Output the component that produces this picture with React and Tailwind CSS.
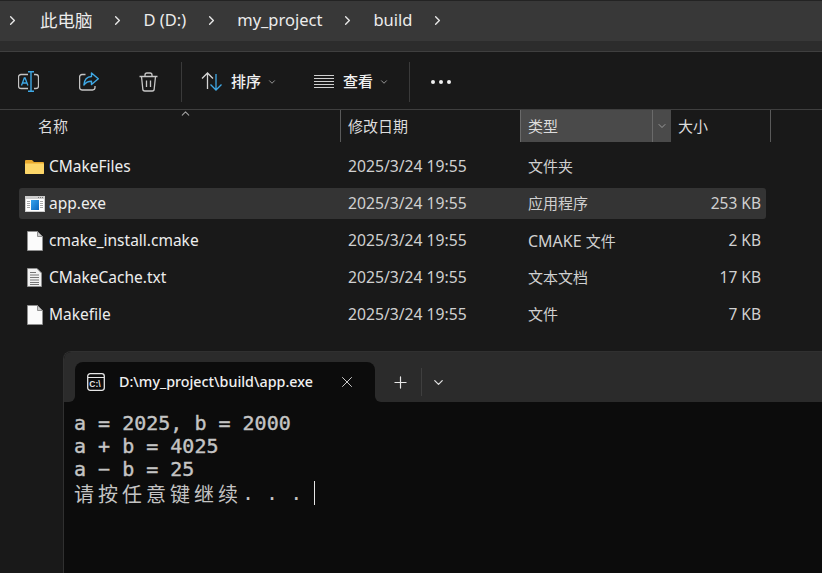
import React from "react";
import { ChevronRight, ChevronDown, ChevronUp, Plus, X } from "lucide-react";

const uiFont = "font-['Noto_Sans','Noto_Sans_CJK_SC',sans-serif]";

function RenameIcon() {
  return (
    <svg width="21" height="21" viewBox="0 0 21 21" fill="none">
      <path d="M10 3.500H3a2.500 2.500 0 0 0-2.500 2.500v9a2.500 2.500 0 0 0 2.500 2.500h7" stroke="#c4c4c4" strokeWidth="1.300" />
      <path d="M16 3.500h2a2.500 2.500 0 0 1 2.500 2.500v9a2.500 2.500 0 0 1-2.500 2.500h-2" stroke="#c4c4c4" strokeWidth="1.300" />
      <path d="M10 .7h6M13 .7v19.600M10 20.300h6" stroke="#3fa9e6" strokeWidth="1.400" />
      <path d="M3.500 14.500 6.300 7h.8l2.800 7.500M4.600 12h4.200" stroke="#3fa9e6" strokeWidth="1.300" />
    </svg>
  );
}

function ShareIcon() {
  return (
    <svg width="20" height="19" viewBox="0 0 20 19" fill="none">
      <path d="M6.500 2.500H3a2.400 2.400 0 0 0-2.400 2.400v10.700a2.400 2.400 0 0 0 2.400 2.400h10.600a2.400 2.400 0 0 0 2.400-2.400v-1.500" stroke="#c4c4c4" strokeWidth="1.300" />
      <path d="M12.500 1 19.300 6.800l-6.800 5.700V9.300c-3.500 0-5.800 1.200-7.600 3.700.4-4.800 3-8.300 7.600-8.500z" stroke="#3fa9e6" strokeWidth="1.400" strokeLinejoin="round" />
    </svg>
  );
}

function TrashIcon() {
  return (
    <svg width="19" height="20" viewBox="0 0 19 20" fill="none" stroke="#c8c8c8" strokeWidth="1.300">
      <path d="M.5 4.500h18M6 4.500V3a2 2 0 0 1 2-2h3a2 2 0 0 1 2 2v1.500" />
      <path d="M2.500 4.500 3.800 17a2 2 0 0 0 2 2h7.400a2 2 0 0 0 2-2l1.300-12.500" />
      <path d="M7.500 8.500v6.500M11.500 8.500v6.500" />
    </svg>
  );
}

function SortIcon() {
  return (
    <svg width="21" height="19" viewBox="0 0 21 19" fill="none" strokeWidth="1.300">
      <path d="M1 6.500 6.500 1 12 6.500M6.500 1v16" stroke="#d5d5d5" />
      <path d="M9.500 12.500 15 18l5.500-5.500M15 2v16" stroke="#3fa9e6" />
    </svg>
  );
}

function ViewIcon() {
  return (
    <svg width="20" height="14" viewBox="0 0 20 14" stroke="#cfcfcf" strokeWidth="1">
      <path d="M0 .5h20M0 3.500h20M0 6.500h20M0 9.500h20M0 12.500h20" />
    </svg>
  );
}

function FolderIcon() {
  return (
    <svg width="19" height="14" viewBox="0 0 19 14">
      <path d="M1 0h6l2 2h9a1 1 0 0 1 1 1v10a1 1 0 0 1-1 1H1a1 1 0 0 1-1-1V1a1 1 0 0 1 1-1z" fill="#e8a92e" />
      <path d="M0 3.500h18a1 1 0 0 1 1 1V13a1 1 0 0 1-1 1H1a1 1 0 0 1-1-1z" fill="#fcd669" />
    </svg>
  );
}

function ExeIcon() {
  return (
    <svg width="20" height="16" viewBox="0 0 20 16">
      <defs>
        <linearGradient id="exeBlue" x1="0" y1="0" x2="1" y2="1">
          <stop offset="0" stopColor="#35a4ee" />
          <stop offset="1" stopColor="#0a66bd" />
        </linearGradient>
      </defs>
      <rect width="20" height="16" fill="#cdcdcd" />
      <rect x="1" y="3" width="18" height="12" fill="#fff" />
      <rect x="6" y="4" width="8" height="10" fill="url(#exeBlue)" />
      <path d="M2 5.500h3M2 7.500h3M2 9.500h3M2 11.500h3M15 5.500h3M15 7.500h3M15 9.500h3M15 11.500h3" stroke="#a8a8a8" strokeWidth="1" />
      <path d="M13 1h1v1h-1zM15 1h1v1h-1zM17 1h1v1h-1z" fill="#777" />
    </svg>
  );
}

function FileIcon() {
  return (
    <svg width="16" height="20" viewBox="0 0 16 20">
      <path d="M.5.500h10l5 5v14H.500z" fill="#fbfbfb" stroke="#8f8f8f" />
      <path d="M10.500.500v5h5z" fill="#c9c9c9" stroke="#8f8f8f" />
    </svg>
  );
}

function TextFileIcon() {
  return (
    <svg width="15" height="19" viewBox="0 0 15 19">
      <path d="M.5.500h9.500l4.500 4.500v13.500H.500z" fill="#f2f2f2" stroke="#8f8f8f" />
      <path d="M3 4.500h6M3 7h9M3 9.500h9M3 12h9M3 14.500h9M3 16.500h9" stroke="#777" strokeWidth="1" />
    </svg>
  );
}

function TerminalIcon() {
  return (
    <svg width="18" height="18" viewBox="0 0 18 18" fill="none">
      <rect x=".7" y=".7" width="16.600" height="16.600" rx="2.500" stroke="#e6e6e6" strokeWidth="1.300" />
      <path d="M1 4.500h16" stroke="#e6e6e6" strokeWidth="1.200" />
      <text x="2.300" y="13.700" fontSize="8.500" fontWeight="700" fill="#e6e6e6" fontFamily="Liberation Sans, sans-serif">C:\</text>
    </svg>
  );
}

const files = [
  { name: "CMakeFiles", type: "文件夹", size: "", icon: <FolderIcon /> },
  { name: "app.exe", type: "应用程序", size: "253 KB", icon: <ExeIcon />, selected: true },
  { name: "cmake_install.cmake", prefix: "CMAKE ", type: "文件", size: "2 KB", icon: <FileIcon /> },
  { name: "CMakeCache.txt", type: "文本文档", size: "17 KB", icon: <TextFileIcon /> },
  { name: "Makefile", type: "文件", size: "7 KB", icon: <FileIcon /> },
];

function Crumb({ children, className }) {
  return (
    <>
      <span className={className}>{children}</span>
      <ChevronRight size={15} strokeWidth={2.2} className="ml-[17.500px] text-[#e8e8e8]" />
    </>
  );
}

function FileRow({ file }) {
  return (
    <div className={`flex items-center h-[31px] w-[747px] rounded-[3px] ${file.selected ? "bg-[#343434]" : ""}`}>
      <div className="w-[30px] flex justify-center shrink-0 pl-[1px]">{file.icon}</div>
      <div className="w-[299px] text-[#ededed]">{file.name}</div>
      <div className="w-[180px] text-[#d0d0d0] text-[15.700px]">2025/3/24 19:55</div>
      <div className="w-[120px] text-[#d0d0d0] text-[15px]">
        {file.prefix && <span className="text-[16px]">{file.prefix}</span>}
        {file.type}
      </div>
      <div className="w-[113px] text-right text-[#d0d0d0]">{file.size}</div>
    </div>
  );
}

export default function App() {
  return (
    <div className={`relative w-[822px] h-[573px] overflow-hidden bg-[#191919] text-[15.500px] ${uiFont}`}>
      {/* address bar */}
      <div className="h-[1px] bg-[#232323]" />
      <div className="h-[40px] bg-[#383838] flex items-center text-[#ececec] text-[16.500px] pb-[1px]">
        <ChevronRight size={15} strokeWidth={2.2} className="ml-[5px] text-[#e8e8e8]" />
        <Crumb className="ml-[20px] text-[17.500px]">此电脑</Crumb>
        <Crumb className="ml-[18.500px]">D (D:)</Crumb>
        <Crumb className="ml-[18.500px]">my_project</Crumb>
        <Crumb className="ml-[18.500px]">build</Crumb>
      </div>
      <div className="h-[10px] bg-[#2c2c2c]" />
      <div className="h-[1px] bg-[#3f3f3f]" />

      {/* toolbar */}
      <div className="h-[57px] pt-[2px] flex items-center text-[15px] font-medium text-[#f0f0f0]">
        <div className="ml-[18px]"><RenameIcon /></div>
        <div className="ml-[40px]"><ShareIcon /></div>
        <div className="ml-[40px]"><TrashIcon /></div>
        <div className="w-px h-[40px] bg-[#3a3a3a] ml-[23px]" />
        <div className="ml-[19px]"><SortIcon /></div>
        <span className="ml-[9px]">排序</span>
        <ChevronDown size={10} className="ml-[6px] text-[#b0b0b0]" />
        <div className="ml-[37px]"><ViewIcon /></div>
        <span className="ml-[9px]">查看</span>
        <ChevronDown size={10} className="ml-[6px] text-[#b0b0b0]" />
        <div className="w-px h-[40px] bg-[#3a3a3a] ml-[20px]" />
        <div className="ml-[21px] flex gap-[4px]">
          <span className="w-[4px] h-[4px] rounded-full bg-[#f0f0f0]" />
          <span className="w-[4px] h-[4px] rounded-full bg-[#f0f0f0]" />
          <span className="w-[4px] h-[4px] rounded-full bg-[#f0f0f0]" />
        </div>
      </div>
      <div className="h-[1px] bg-[#3f3f3f]" />

      {/* column headers */}
      <div className="relative h-[32px] flex items-stretch text-[15px] text-[#dcdcdc]">
        <ChevronUp size={13} className="absolute left-[179px] top-[-3px] text-[#a0a0a0]" />
        <div className="w-[341px] pl-[38px] border-r border-[#5a5a5a] flex items-center">名称</div>
        <div className="w-[179px] pl-[7px] flex items-center">修改日期</div>
        <div className="w-[151px] flex items-stretch bg-[#4a4a4a] border-l border-[#6a6a6a]">
          <div className="flex-1 pl-[7px] flex items-center">类型</div>
          <div className="w-[19px] border-l border-[#6a6a6a] flex items-center justify-center">
            <ChevronDown size={12} className="text-[#9a9a9a]" />
          </div>
        </div>
        <div className="w-[100px] pl-[7px] border-r border-[#5a5a5a] flex items-center">大小</div>
      </div>

      {/* file list */}
      <div className="pl-[19px] pt-[9px] flex flex-col gap-[6px]">
        {files.map((f) => <FileRow key={f.name} file={f} />)}
      </div>

      {/* terminal window */}
      <div className="absolute left-[63px] top-[351px] w-[770px] h-[230px] bg-[#0c0c0c] rounded-tl-[8px] border-l border-t border-[#303030] flex flex-col overflow-hidden">
        <div className="h-[10px] bg-[#2b2b2b]" />
        <div className="h-[40px] flex items-stretch">
          <div className="w-[11px] bg-[#2b2b2b] rounded-br-[6px]" />
          <div className="w-[300px] bg-[#2b2b2b]">
            <div className="h-full bg-[#0c0c0c] rounded-t-[8px] flex items-center pl-[12px] text-[14.300px] font-medium text-[#f0f0f0]">
              <TerminalIcon />
              <span className="ml-[14px]">D:\my_project\build\app.exe</span>
              <X size={18} className="ml-[25px] text-[#e0e0e0]" strokeWidth={1.200} />
            </div>
          </div>
          <div className="flex-1 bg-[#2b2b2b] rounded-bl-[6px] flex items-center">
            <Plus size={19} className="ml-[16px] text-[#e8e8e8]" strokeWidth={1.500} />
            <div className="w-px h-[28px] bg-[#3f3f3f] ml-[11px]" />
            <ChevronDown size={15} className="ml-[9px] text-[#e0e0e0]" />
          </div>
        </div>
        <div className="pl-[10px] pt-[10px] text-[20px] leading-[23px] text-[#c4c4c4] font-['DejaVu_Sans_Mono','Noto_Sans_CJK_SC',monospace] whitespace-pre [-webkit-text-stroke:0.4px_#c4c4c4]">
          <div>a = 2025, b = 2000</div>
          <div>a + b = 4025</div>
          <div>a − b = 25</div>
          <div className="flex items-center [-webkit-text-stroke:0]">
            <span className="text-[20px] tracking-[4px] font-['Noto_Sans_CJK_SC',sans-serif]">请按任意键继续</span>
            <span>. . . </span>
            <span className="w-px h-[24px] bg-[#e6e6e6]" />
          </div>
        </div>
      </div>
    </div>
  );
}
